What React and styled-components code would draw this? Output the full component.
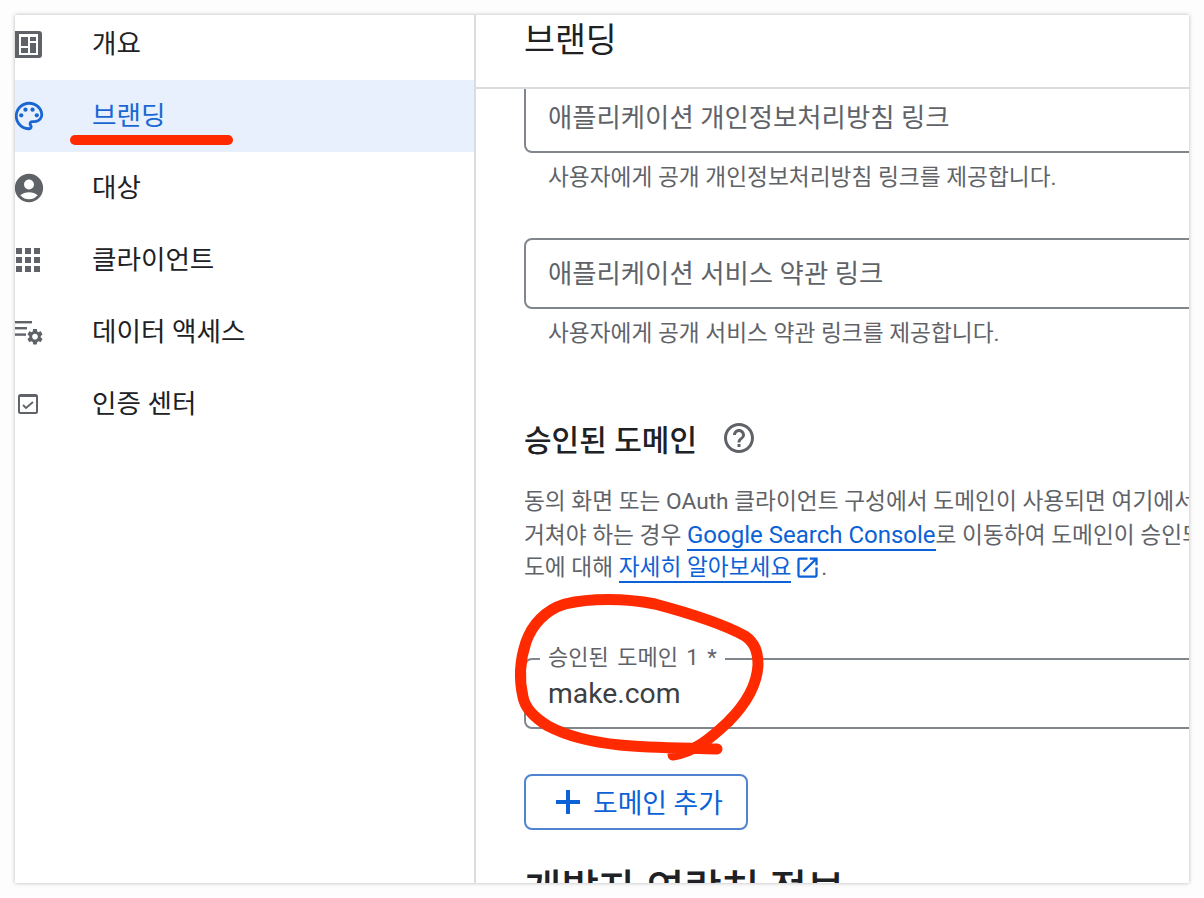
import React from 'react'
import styled, { createGlobalStyle } from 'styled-components'

const GlobalStyle = createGlobalStyle`
  html, body {
    margin: 0;
    padding: 0;
    background: #fdfdfd;
  }
  body {
    font-family: Roboto, "Noto Sans CJK KR", sans-serif;
    color: #202124;
  }
`

const Page = styled.div`
  width: 1204px;
  height: 898px;
  padding: 15px;
  box-sizing: border-box;
  overflow: hidden;
`

const Window = styled.div`
  position: relative;
  display: flex;
  width: 1174px;
  height: 868px;
  background: #fff;
  overflow: hidden;
  box-shadow: 0 0 4px rgba(0, 0, 0, 0.28);
`

const Sidebar = styled.nav`
  flex: 0 0 459px;
  border-right: 2px solid #dadce0;
`

const NavItem = styled.div`
  display: flex;
  align-items: center;
  height: 72px;
  margin-top: ${p => (p.$first ? '-7px' : '0')};
  background: ${p => (p.$active ? '#e8f0fe' : 'transparent')};
  color: ${p => (p.$active ? '#1a67d2' : '#202124')};
  font-size: 26.6px;
`

const NavIcon = styled.span`
  display: flex;
  flex: 0 0 77px;
  align-items: center;
  color: ${p => (p.$active ? '#1a67d2' : '#5f6368')};
  svg {
    display: block;
  }
`

const NavLabel = styled.span`
  padding-bottom: 6px;
`

const Main = styled.main`
  flex: 1;
  min-width: 0;
  overflow: hidden;
`

const TitleBar = styled.header`
  display: flex;
  align-items: center;
  height: 74px;
  padding: 0 0 28px 48px;
  box-sizing: border-box;
  border-bottom: 2px solid #dadce0;
  font-size: 33.6px;
  color: #202124;
`

const Content = styled.div`
  padding-left: 48px;
  width: 800px;
`

const Field = styled.div`
  display: flex;
  align-items: center;
  height: ${p => (p.$clipped ? '64px' : '71px')};
  padding: 0 0 ${p => (p.$clipped ? '9px' : '4px')} 22px;
  box-sizing: border-box;
  border: 2px solid #80868b;
  border-top: ${p => (p.$clipped ? 'none' : '2px solid #80868b')};
  border-radius: ${p => (p.$clipped ? '0 0 8px 8px' : '8px')};
  font-size: 26.4px;
  color: #5f6368;
`

const HelpText = styled.div`
  height: 85px;
  padding: 11px 0 0 24px;
  box-sizing: border-box;
  font-size: 22.7px;
  line-height: 28px;
  color: #5f6368;
`

const SectionTitle = styled.h2`
  display: flex;
  align-items: center;
  gap: 24px;
  margin: 0;
  padding-top: 14px;
  height: 60px;
  font-size: 30px;
  font-weight: 500;
  color: #202124;
  svg {
    display: block;
  }
`

const Description = styled.p`
  margin: 18px 0 0;
  width: 800px;
  font-size: 22.7px;
  line-height: 32.5px;
  color: #5f6368;
  white-space: nowrap;
`

const TextLink = styled.a`
  color: #0b62d6;
  border-bottom: 2px solid #0b62d6;
  font-size: ${p => (p.$latin ? '24px' : '22.7px')};
`

const ExternalIcon = styled.svg`
  margin: 0 0 0 3px;
  vertical-align: -6px;
`

const OutlinedField = styled.div`
  position: relative;
  display: flex;
  align-items: flex-end;
  height: 71px;
  margin-top: 73px;
  padding: 0 0 17px 22px;
  box-sizing: border-box;
  border: 2px solid #80868b;
  border-radius: 8px;
  font-size: 28.3px;
  color: #3c4043;
`

const FloatingLabel = styled.span`
  position: absolute;
  left: 14px;
  top: -17px;
  padding: 0 8px;
  background: #fff;
  font-size: 22px;
  line-height: 30px;
  word-spacing: 3px;
  color: #5f6368;
`

const AddButton = styled.button`
  display: flex;
  align-items: center;
  gap: 11px;
  width: 224px;
  height: 56px;
  margin-top: 45px;
  padding: 0 0 0 28px;
  box-sizing: border-box;
  background: #fff;
  border: 2px solid #5084d0;
  border-radius: 8px;
  font-family: inherit;
  font-size: 26.8px;
  color: #0b62d6;
`

const ClippedTitle = styled.h2`
  margin: 38px 0 0;
  font-size: 40.8px;
  line-height: 44px;
  font-weight: 500;
  color: #202124;
  white-space: nowrap;
`

const Markup = styled.svg`
  position: absolute;
  left: -15px;
  top: -15px;
  pointer-events: none;
`

const DashboardIcon = () => (
  <svg width="27" height="27" viewBox="0 0 27 27" fill="currentColor">
    <path d="M0 0h24a3 3 0 0 1 3 3v21a3 3 0 0 1-3 3H0z" />
    <rect x="4" y="3" width="19" height="21" fill="#fff" />
    <rect x="6" y="6" width="7" height="9" />
    <rect x="15" y="6" width="6" height="4" />
    <rect x="6" y="17" width="7" height="5" />
    <rect x="15" y="12" width="6" height="10" />
  </svg>
)

const PaletteIcon = () => (
  <svg width="34" height="34" viewBox="0 0 24 24" fill="currentColor" style={{ marginLeft: -3 }}>
    <path d="M12 22C6.49 22 2 17.51 2 12S6.49 2 12 2s10 4.04 10 9c0 3.31-2.69 6-6 6h-1.77c-.28 0-.5.22-.5.5 0 .12.05.23.13.33.41.47.64 1.06.64 1.67 0 1.38-1.12 2.5-2.5 2.5zm0-18c-4.41 0-8 3.59-8 8s3.59 8 8 8c.28 0 .5-.22.5-.5 0-.16-.08-.28-.14-.35-.41-.46-.63-1.05-.63-1.65 0-1.38 1.12-2.5 2.5-2.5H16c2.21 0 4-1.79 4-4 0-3.86-3.59-7-8-7z" />
    <circle cx="6.5" cy="11.5" r="1.5" />
    <circle cx="9.5" cy="7.5" r="1.5" />
    <circle cx="14.5" cy="7.5" r="1.5" />
    <circle cx="17.5" cy="11.5" r="1.5" />
  </svg>
)

const AccountIcon = () => (
  <svg width="34" height="34" viewBox="0 0 24 24" fill="currentColor" style={{ marginLeft: -3 }}>
    <path d="M12 2C6.48 2 2 6.48 2 12s4.48 10 10 10 10-4.48 10-10S17.52 2 12 2zm0 4c1.93 0 3.5 1.57 3.5 3.5S13.93 13 12 13s-3.5-1.57-3.5-3.5S10.07 6 12 6zm0 14c-2.03 0-4.43-.82-6.14-2.88C7.55 15.8 9.68 15 12 15s4.45.8 6.14 2.12C16.43 19.18 14.03 20 12 20z" />
  </svg>
)

const AppsIcon = () => (
  <svg width="26" height="26" viewBox="0 0 26 26" fill="currentColor" style={{ marginLeft: 1 }}>
    {[1, 10, 19].flatMap(y =>
      [0, 9, 18].map(x => <rect key={`${x}-${y}`} x={x} y={y} width="6" height="6" />)
    )}
  </svg>
)

const DataAccessIcon = () => (
  <svg width="30" height="28" viewBox="0 0 30 28" fill="currentColor">
    <rect x="0" y="3" width="17" height="2.4" />
    <rect x="0" y="9" width="12" height="2.4" />
    <rect x="0" y="15.4" width="11" height="2.4" />
    <path
      transform="translate(10.4 9.1) scale(0.8)"
      d="M19.14 12.94c.04-.3.06-.61.06-.94 0-.32-.02-.64-.07-.94l2.03-1.58c.18-.14.23-.41.12-.61l-1.92-3.32c-.12-.22-.37-.29-.59-.22l-2.39.96c-.5-.38-1.03-.7-1.62-.94l-.36-2.54c-.04-.24-.24-.41-.48-.41h-3.84c-.24 0-.43.17-.47.41l-.36 2.54c-.59.24-1.13.57-1.62.94l-2.39-.96c-.22-.08-.47 0-.59.22L2.74 8.87c-.12.21-.08.47.12.61l2.03 1.58c-.05.3-.09.63-.09.94s.02.64.07.94l-2.03 1.58c-.18.14-.23.41-.12.61l1.92 3.32c.12.22.37.29.59.22l2.39-.96c.5.38 1.03.7 1.62.94l.36 2.54c.05.24.24.41.48.41h3.84c.24 0 .44-.17.47-.41l.36-2.54c.59-.24 1.13-.56 1.62-.94l2.39.96c.22.08.47 0 .59-.22l1.92-3.32c.12-.22.07-.47-.12-.61l-2.01-1.58zM12 15.6c-1.98 0-3.6-1.62-3.6-3.6s1.62-3.6 3.6-3.6 3.6 1.62 3.6 3.6-1.62 3.6-3.6 3.6z"
    />
  </svg>
)

const VerifyIcon = () => (
  <svg width="22" height="22" viewBox="0 0 22 22" fill="none" stroke="currentColor" style={{ marginLeft: 2 }}>
    <rect x="2" y="2" width="18" height="18" rx="1.5" strokeWidth="2" />
    <path d="M2 3h18" strokeWidth="2" />
    <path d="M6 12l3 3 7-6" strokeWidth="1.8" />
  </svg>
)

const navItems = [
  { label: '개요', icon: <DashboardIcon /> },
  { label: '브랜딩', icon: <PaletteIcon />, active: true },
  { label: '대상', icon: <AccountIcon /> },
  { label: '클라이언트', icon: <AppsIcon /> },
  { label: '데이터 액세스', icon: <DataAccessIcon /> },
  { label: '인증 센터', icon: <VerifyIcon /> }
]

export default function App() {
  return (
    <Page>
      <GlobalStyle />
      <Window>
        <Sidebar>
          {navItems.map((item, i) => (
            <NavItem key={item.label} $first={i === 0} $active={item.active}>
              <NavIcon $active={item.active}>{item.icon}</NavIcon>
              <NavLabel>{item.label}</NavLabel>
            </NavItem>
          ))}
        </Sidebar>
        <Main>
          <TitleBar>브랜딩</TitleBar>
          <Content>
            <Field $clipped>애플리케이션 개인정보처리방침 링크</Field>
            <HelpText>사용자에게 공개 개인정보처리방침 링크를 제공합니다.</HelpText>
            <Field>애플리케이션 서비스 약관 링크</Field>
            <HelpText>사용자에게 공개 서비스 약관 링크를 제공합니다.</HelpText>
            <SectionTitle>
              승인된 도메인
              <svg width="36" height="36" viewBox="0 0 24 24" fill="#5f6368">
                <path d="M11 18h2v-2h-2v2zm1-16C6.48 2 2 6.48 2 12s4.48 10 10 10 10-4.48 10-10S17.52 2 12 2zm0 18c-4.41 0-8-3.59-8-8s3.59-8 8-8 8 3.59 8 8-3.59 8-8 8zm0-14c-2.21 0-4 1.79-4 4h2c0-1.1.9-2 2-2s2 .9 2 2c0 2-3 1.75-3 5h2c0-2.25 3-2.5 3-5 0-2.21-1.79-4-4-4z" />
              </svg>
            </SectionTitle>
            <Description>
              동의 화면 또는 OAuth 클라이언트 구성에서 도메인이 사용되면 여기에서
              <br />
              거쳐야 하는 경우 <TextLink $latin>Google Search Console</TextLink>로 이동하여 도메인이 승인되었
              <br />
              도에 대해 <TextLink>자세히 알아보세요</TextLink>
              <ExternalIcon width="27" height="27" viewBox="0 0 24 24" fill="#0b62d6">
                <path d="M19 19H5V5h7V3H5a2 2 0 0 0-2 2v14a2 2 0 0 0 2 2h14c1.1 0 2-.9 2-2v-7h-2v7zM14 3v2h3.59l-9.83 9.83 1.41 1.41L19 6.41V10h2V3h-7z" />
              </ExternalIcon>
              .
            </Description>
            <OutlinedField>
              <FloatingLabel>승인된 도메인 1 *</FloatingLabel>
              make.com
            </OutlinedField>
            <AddButton>
              <svg width="28" height="28" viewBox="0 0 28 28" fill="#0b62d6">
                <path d="M12 2h4v10h10v4H16v10h-4V16H2v-4h10z" />
              </svg>
              도메인 추가
            </AddButton>
            <ClippedTitle>개발자 연락처 정보</ClippedTitle>
          </Content>
        </Main>
        <Markup width="1204" height="898" viewBox="0 0 1204 898" fill="none" stroke="#ff2a00" strokeLinecap="round" strokeLinejoin="round">
          <path d="M75 140H228" strokeWidth="10" />
          <path
            d="M717 749C690 748 650 748 620 745C590 742 565 735 548 726C535 718 525 708 523 697C519 680 520 660 526 642C532 625 545 610 565 604C590 598 625 598 655 604C685 612 720 622 745 636C755 643 758 652 758 665C757 685 745 705 728 722C712 737 695 752 673 755"
            strokeWidth="11"
          />
        </Markup>
      </Window>
    </Page>
  )
}
